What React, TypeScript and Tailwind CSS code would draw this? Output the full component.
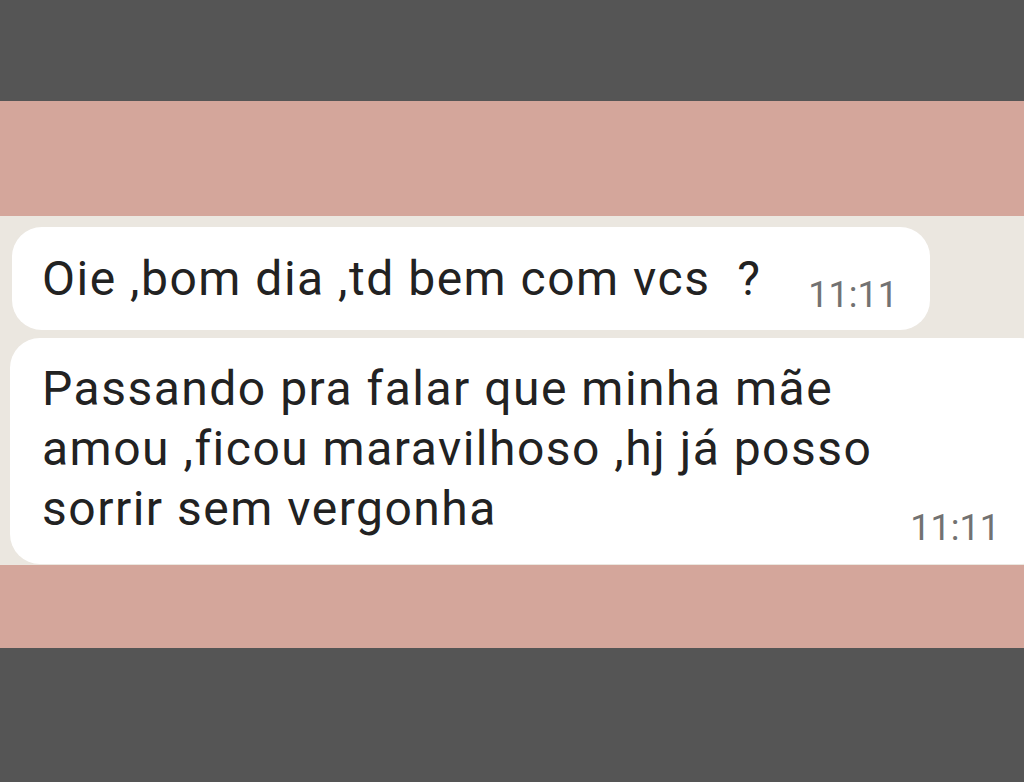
import React from "react";

export default function App() {
  return (
    <div className="w-[1024px] h-[782px] flex flex-col overflow-hidden" style={{ fontFamily: "Roboto, 'Noto Sans', sans-serif" }}>
      <div className="h-[101px] bg-[#555555] shrink-0" />
      <div className="h-[115px] bg-[#d4a69b] shrink-0" />
      <div className="h-[349px] shrink-0 bg-[#ebe7e0] overflow-hidden flex flex-col pt-[11px] gap-[8px]">
        <div className="ml-[12px] w-[918px] h-[103px] bg-white rounded-[30px] flex items-start justify-between pr-[32px] shrink-0">
          <div className="pl-[30px] pt-[22px] text-[48px] leading-[60px] tracking-[1.5px] text-[#222222] whitespace-pre">
            Oie ,bom dia ,td bem com vcs  ?
          </div>
          <div className="pt-[48px] text-[36px] leading-[40px] text-[#727272]">11:11</div>
        </div>
        <div className="ml-[10px] w-[1040px] h-[226px] bg-white rounded-[30px] flex justify-between pr-[50px] shrink-0">
          <div className="pl-[32px] pt-[21px] text-[48px] leading-[60px] tracking-[1.5px] text-[#222222]">
            <div>Passando pra falar que minha mãe</div>
            <div>amou ,ficou maravilhoso ,hj já posso</div>
            <div>sorrir sem vergonha</div>
          </div>
          <div className="self-end pb-[16px] text-[36px] leading-[40px] text-[#727272]">11:11</div>
        </div>
      </div>
      <div className="h-[83px] bg-[#d4a69b] shrink-0" />
      <div className="flex-1 bg-[#555555]" />
    </div>
  );
}
